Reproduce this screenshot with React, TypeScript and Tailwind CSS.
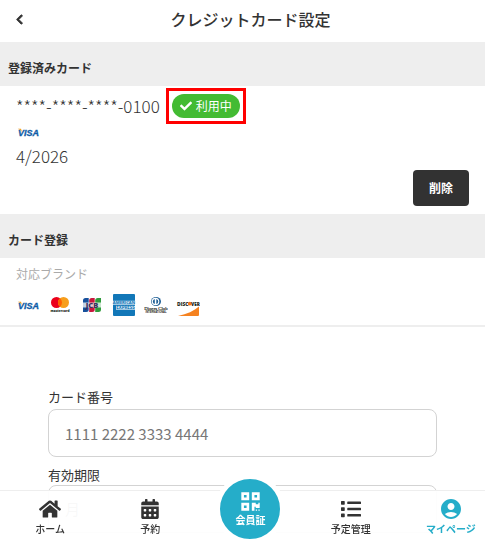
import { FaCalendarAlt, FaCheck, FaChevronLeft, FaHome, FaList, FaQrcode } from 'react-icons/fa'
import { MdAccountCircle } from 'react-icons/md'

const NAV = [
  { href: '#home',     label: 'ホーム',     Icon: FaHome,          size: 22 },
  { href: '#reserve',  label: '予約',       Icon: FaCalendarAlt,   size: 20 },
  { href: '#member',   label: '会員証',     Icon: FaQrcode,        size: 21 },
  { href: '#schedule', label: '予定管理',   Icon: FaList,          size: 20 },
  { href: '#mypage',   label: 'マイページ', Icon: MdAccountCircle, size: 24 },
]

const SANS = "font-['Noto_Sans_CJK_JP',sans-serif]"

function Visa() {
  return (
    <svg width="24" height="24" viewBox="0 0 24 24" role="img" aria-label="VISA">
      <text x="2" y="15.500" fontFamily="Liberation Sans, sans-serif" fontSize="9" fontWeight="700" fontStyle="italic" fill="#0e5ca6" stroke="#0e5ca6" strokeWidth=".3">VISA</text>
      <path d="M1.800 8.800h3.200l1.200 3.600C5.400 10.800 4 9.600 1.800 8.800z" fill="#f3a01d" />
    </svg>
  )
}

function Mastercard() {
  return (
    <svg width="24" height="24" viewBox="0 0 24 24" role="img" aria-label="Mastercard">
      <circle cx="8.500" cy="9.500" r="5.500" fill="#eb001b" />
      <circle cx="15.500" cy="9.500" r="5.500" fill="#f79e1b" />
      <path d="M12 5.260a5.500 5.500 0 0 1 0 8.480a5.500 5.500 0 0 1 0-8.480z" fill="#ff5f00" />
      <text x="12" y="18.800" textAnchor="middle" fontFamily="Open Sans, sans-serif" fontSize="3.200" fontWeight="800" fill="#231f20">mastercard</text>
    </svg>
  )
}

function Jcb() {
  return (
    <svg width="24" height="24" viewBox="0 0 24 24" role="img" aria-label="JCB">
      <path d="M5.500 5H8.700v11.500A2.500 2.500 0 0 1 6.200 19H3V7.500A2.500 2.500 0 0 1 5.500 5z" fill="#17509b" />
      <path d="M11.700 5H14.700v11.500a2.500 2.500 0 0 1-2.500 2.500H9.200V7.500A2.500 2.500 0 0 1 11.700 5z" fill="#c8163c" />
      <path d="M17.700 5H21v11.500a2.500 2.500 0 0 1-2.500 2.500H15.200V7.500A2.500 2.500 0 0 1 17.700 5z" fill="#2f9b3c" />
      <path d="M3 9.500h18v5H3z" fill="#fff" opacity=".75" />
      <text x="12" y="14.700" textAnchor="middle" fontFamily="Open Sans, sans-serif" fontSize="7.500" fontWeight="800" fill="#3a2f5f">JCB</text>
    </svg>
  )
}

function Amex() {
  return (
    <svg width="24" height="24" viewBox="0 0 24 24" role="img" aria-label="American Express">
      <rect x="1" y="1" width="22" height="22" rx="1" fill="#1277b8" />
      <path d="M1 7.700h22v4H1zM4 12.700h19v4H4z" fill="#fff" opacity=".8" />
      <text x="12" y="11.300" textAnchor="middle" fontFamily="Open Sans, sans-serif" fontSize="4.200" fontWeight="700" fill="#1277b8">AMERICAN</text>
      <text x="13.500" y="16.300" textAnchor="middle" fontFamily="Open Sans, sans-serif" fontSize="4.400" fontWeight="700" fill="#1277b8">EXPRESS</text>
    </svg>
  )
}

function Diners() {
  return (
    <svg width="24" height="24" viewBox="0 0 24 24" role="img" aria-label="Diners Club International">
      <ellipse cx="12" cy="8.500" rx="5" ry="4.500" fill="#1f5f96" />
      <circle cx="11.500" cy="8.500" r="3.800" fill="#fff" />
      <path d="M10.800 5.900v5.200a2.700 2.700 0 0 1 0-5.200zM12.300 5.900v5.200a2.700 2.700 0 0 0 0-5.200z" fill="#1f5f96" />
      <text x="12" y="16.800" textAnchor="middle" fontFamily="Liberation Serif, serif" fontSize="4.800" fill="#231f20" stroke="#231f20" strokeWidth=".15">Diners Club</text>
      <text x="12" y="19.700" textAnchor="middle" fontFamily="Liberation Sans, sans-serif" fontSize="2.600" fontWeight="700" fill="#231f20">INTERNATIONAL</text>
    </svg>
  )
}

function Discover() {
  return (
    <svg width="24" height="24" viewBox="0 0 24 24" role="img" aria-label="Discover">
      <text x="1" y="12.500" fontFamily="Open Sans, sans-serif" fontSize="5" fontWeight="800" fill="#231f20">DISC</text>
      <circle cx="13.700" cy="10.700" r="1.900" fill="#f47216" />
      <text x="15" y="12.500" fontFamily="Open Sans, sans-serif" fontSize="4.600" fontWeight="800" fill="#231f20">VER</text>
      <path d="M23 13.500V22a1 1 0 0 1-1 1H2c9-2 16-5 21-9.500z" fill="#f58220" />
    </svg>
  )
}

function SectionTitle({ children }: { children: string }) {
  return <h2 className="bg-[#eeeeee] px-2 pt-4 pb-2 text-xs leading-5 font-bold">{children}</h2>
}

export default function App() {
  return (
    <div className={`min-h-screen overflow-x-hidden bg-white text-[#333333] ${SANS}`}>
      <header className="relative flex h-[42px] items-center justify-center pb-1 pl-4">
        <button aria-label="戻る" className="absolute left-2.5 p-1">
          <FaChevronLeft size={11} stroke="currentColor" strokeWidth={40} />
        </button>
        <h1 className="text-base leading-6 font-medium">クレジットカード設定</h1>
      </header>

      <main>
        {/* Registered card */}
        <SectionTitle>登録済みカード</SectionTitle>
        <section className="px-4 py-2">
          <div className="flex items-center gap-3 text-[17px] leading-6 font-light">
            <span>****-****-****-0100</span>
            <span className="relative flex items-center gap-1 rounded-full bg-[#43bb33] px-2 text-xs leading-6 font-normal text-white">
              <FaCheck size={12} />
              利用中
              <span className="absolute -inset-1.5 border-3 border-[#ff0000]" />
            </span>
          </div>
          <div className="mt-0.5"><Visa /></div>
          <p className="text-[17px] leading-6 font-light">4/2026</p>
          <div className="mt-0.5 flex justify-end">
            <button className="rounded bg-[#323232] px-4 py-2 text-xs leading-5 font-bold text-white">削除</button>
          </div>
        </section>

        {/* Card registration */}
        <SectionTitle>カード登録</SectionTitle>
        <section className="border-b-2 border-[#eeeeee] px-4 py-2">
          <p className="text-xs leading-4 text-[#aaaaaa]">対応ブランド</p>
          <div className="mt-[11px] flex gap-2">
            <Visa />
            <Mastercard />
            <Jcb />
            <Amex />
            <Diners />
            <Discover />
          </div>
        </section>

        <form className="px-12 pt-[58px] text-[13px]">
          <label htmlFor="number" className="block leading-6">カード番号</label>
          <input
            id="number"
            placeholder="1111 2222 3333 4444"
            className="h-12 w-full rounded-lg border border-[#d3d3d3] px-4 text-[15px] placeholder:text-[#777777]"
          />
          <label htmlFor="month" className="mt-2 block leading-5">有効期限</label>
          <div className="flex gap-4">
            <select id="month" className="h-12 flex-1 appearance-none rounded-lg border border-[#d3d3d3] px-4 text-[15px] text-[#777777]">
              <option>月</option>
            </select>
            <select aria-label="年" className="h-12 flex-1 appearance-none rounded-lg border border-[#d3d3d3] px-4 text-[15px] text-[#777777]">
              <option>年</option>
            </select>
          </div>
        </form>
      </main>

      {/* Bottom nav */}
      <nav className="fixed -right-4 bottom-0 left-0 grid h-[53px] grid-cols-5 border-t border-[#eeeeee] bg-white/95 text-[10px] leading-4 font-medium">
        {NAV.map(({ href, label, Icon, size }) =>
          href === '#member' ? (
            <a key={href} href={href} className="-mt-[17px] flex size-[70px] flex-col items-center justify-center justify-self-center rounded-full border-5 border-white bg-[#25adc9] font-bold text-white">
              <Icon size={size} />
              {label}
            </a>
          ) : (
            <a key={href} href={href} className={`flex flex-col items-center pt-1.5 ${href === '#mypage' ? 'font-bold text-[#25adc9]' : ''}`}>
              <span className="flex h-6 items-center"><Icon size={size} /></span>
              {label}
            </a>
          )
        )}
      </nav>
    </div>
  )
}
